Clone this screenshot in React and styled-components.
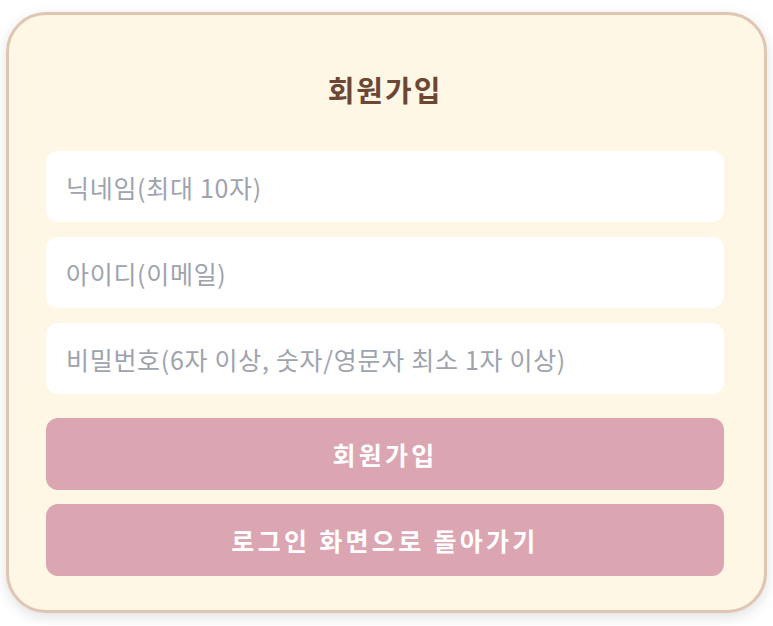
import React from 'react';
import styled, { createGlobalStyle } from 'styled-components';

const GlobalStyle = createGlobalStyle`
    body {
        margin: 0;
        background: #ffffff;
        font-family: 'Noto Sans CJK KR', 'Noto Sans', sans-serif;
    }
`;

const Page = styled.div`
    padding: 12px 6px;
`;

const Card = styled.form`
    box-sizing: border-box;
    width: 761px;
    height: 601px;
    background: #fff7e6;
    border: 3px solid #dfc6b3;
    border-radius: 40px;
    box-shadow: 0 4px 14px rgba(0, 0, 0, 0.12);
    padding: 52px 40px 0 37px;
    display: flex;
    flex-direction: column;
`;

const Title = styled.h1`
    margin: 0 0 40px;
    text-align: center;
    font-size: 29px;
    font-weight: 700;
    letter-spacing: 2px;
    color: #6d4634;
    line-height: 44px;
`;

const Fields = styled.div`
    display: flex;
    flex-direction: column;
    gap: 15px;
`;

const Input = styled.input`
    box-sizing: border-box;
    width: 100%;
    height: 71px;
    border: none;
    outline: none;
    border-radius: 12px;
    background: #ffffff;
    padding: 0 20px;
    font-family: inherit;
    font-size: 25px;
    letter-spacing: 0.7px;
    color: #374151;

    &::placeholder {
        color: #9ea3ad;
    }
`;

const Button = styled.button`
    box-sizing: border-box;
    width: 100%;
    height: 72px;
    border: none;
    border-radius: 12px;
    background: #dba6b2;
    color: #ffffff;
    font-family: inherit;
    font-size: 25px;
    font-weight: 700;
    letter-spacing: 3.3px;
    cursor: pointer;
`;

const Actions = styled.div`
    margin-top: 24px;
    display: flex;
    flex-direction: column;
    gap: 14px;
`;

const App = () => {
    return (
        <Page>
            <GlobalStyle />
            <Card onSubmit={(e) => e.preventDefault()}>
                <Title>회원가입</Title>
                <Fields>
                    <Input placeholder='닉네임(최대 10자)' />
                    <Input placeholder='아이디(이메일)' />
                    <Input type='password' placeholder='비밀번호(6자 이상, 숫자/영문자 최소 1자 이상)' />
                </Fields>
                <Actions>
                    <Button type='submit'>회원가입</Button>
                    <Button type='button'>로그인 화면으로 돌아가기</Button>
                </Actions>
            </Card>
        </Page>
    );
};

export default App;
